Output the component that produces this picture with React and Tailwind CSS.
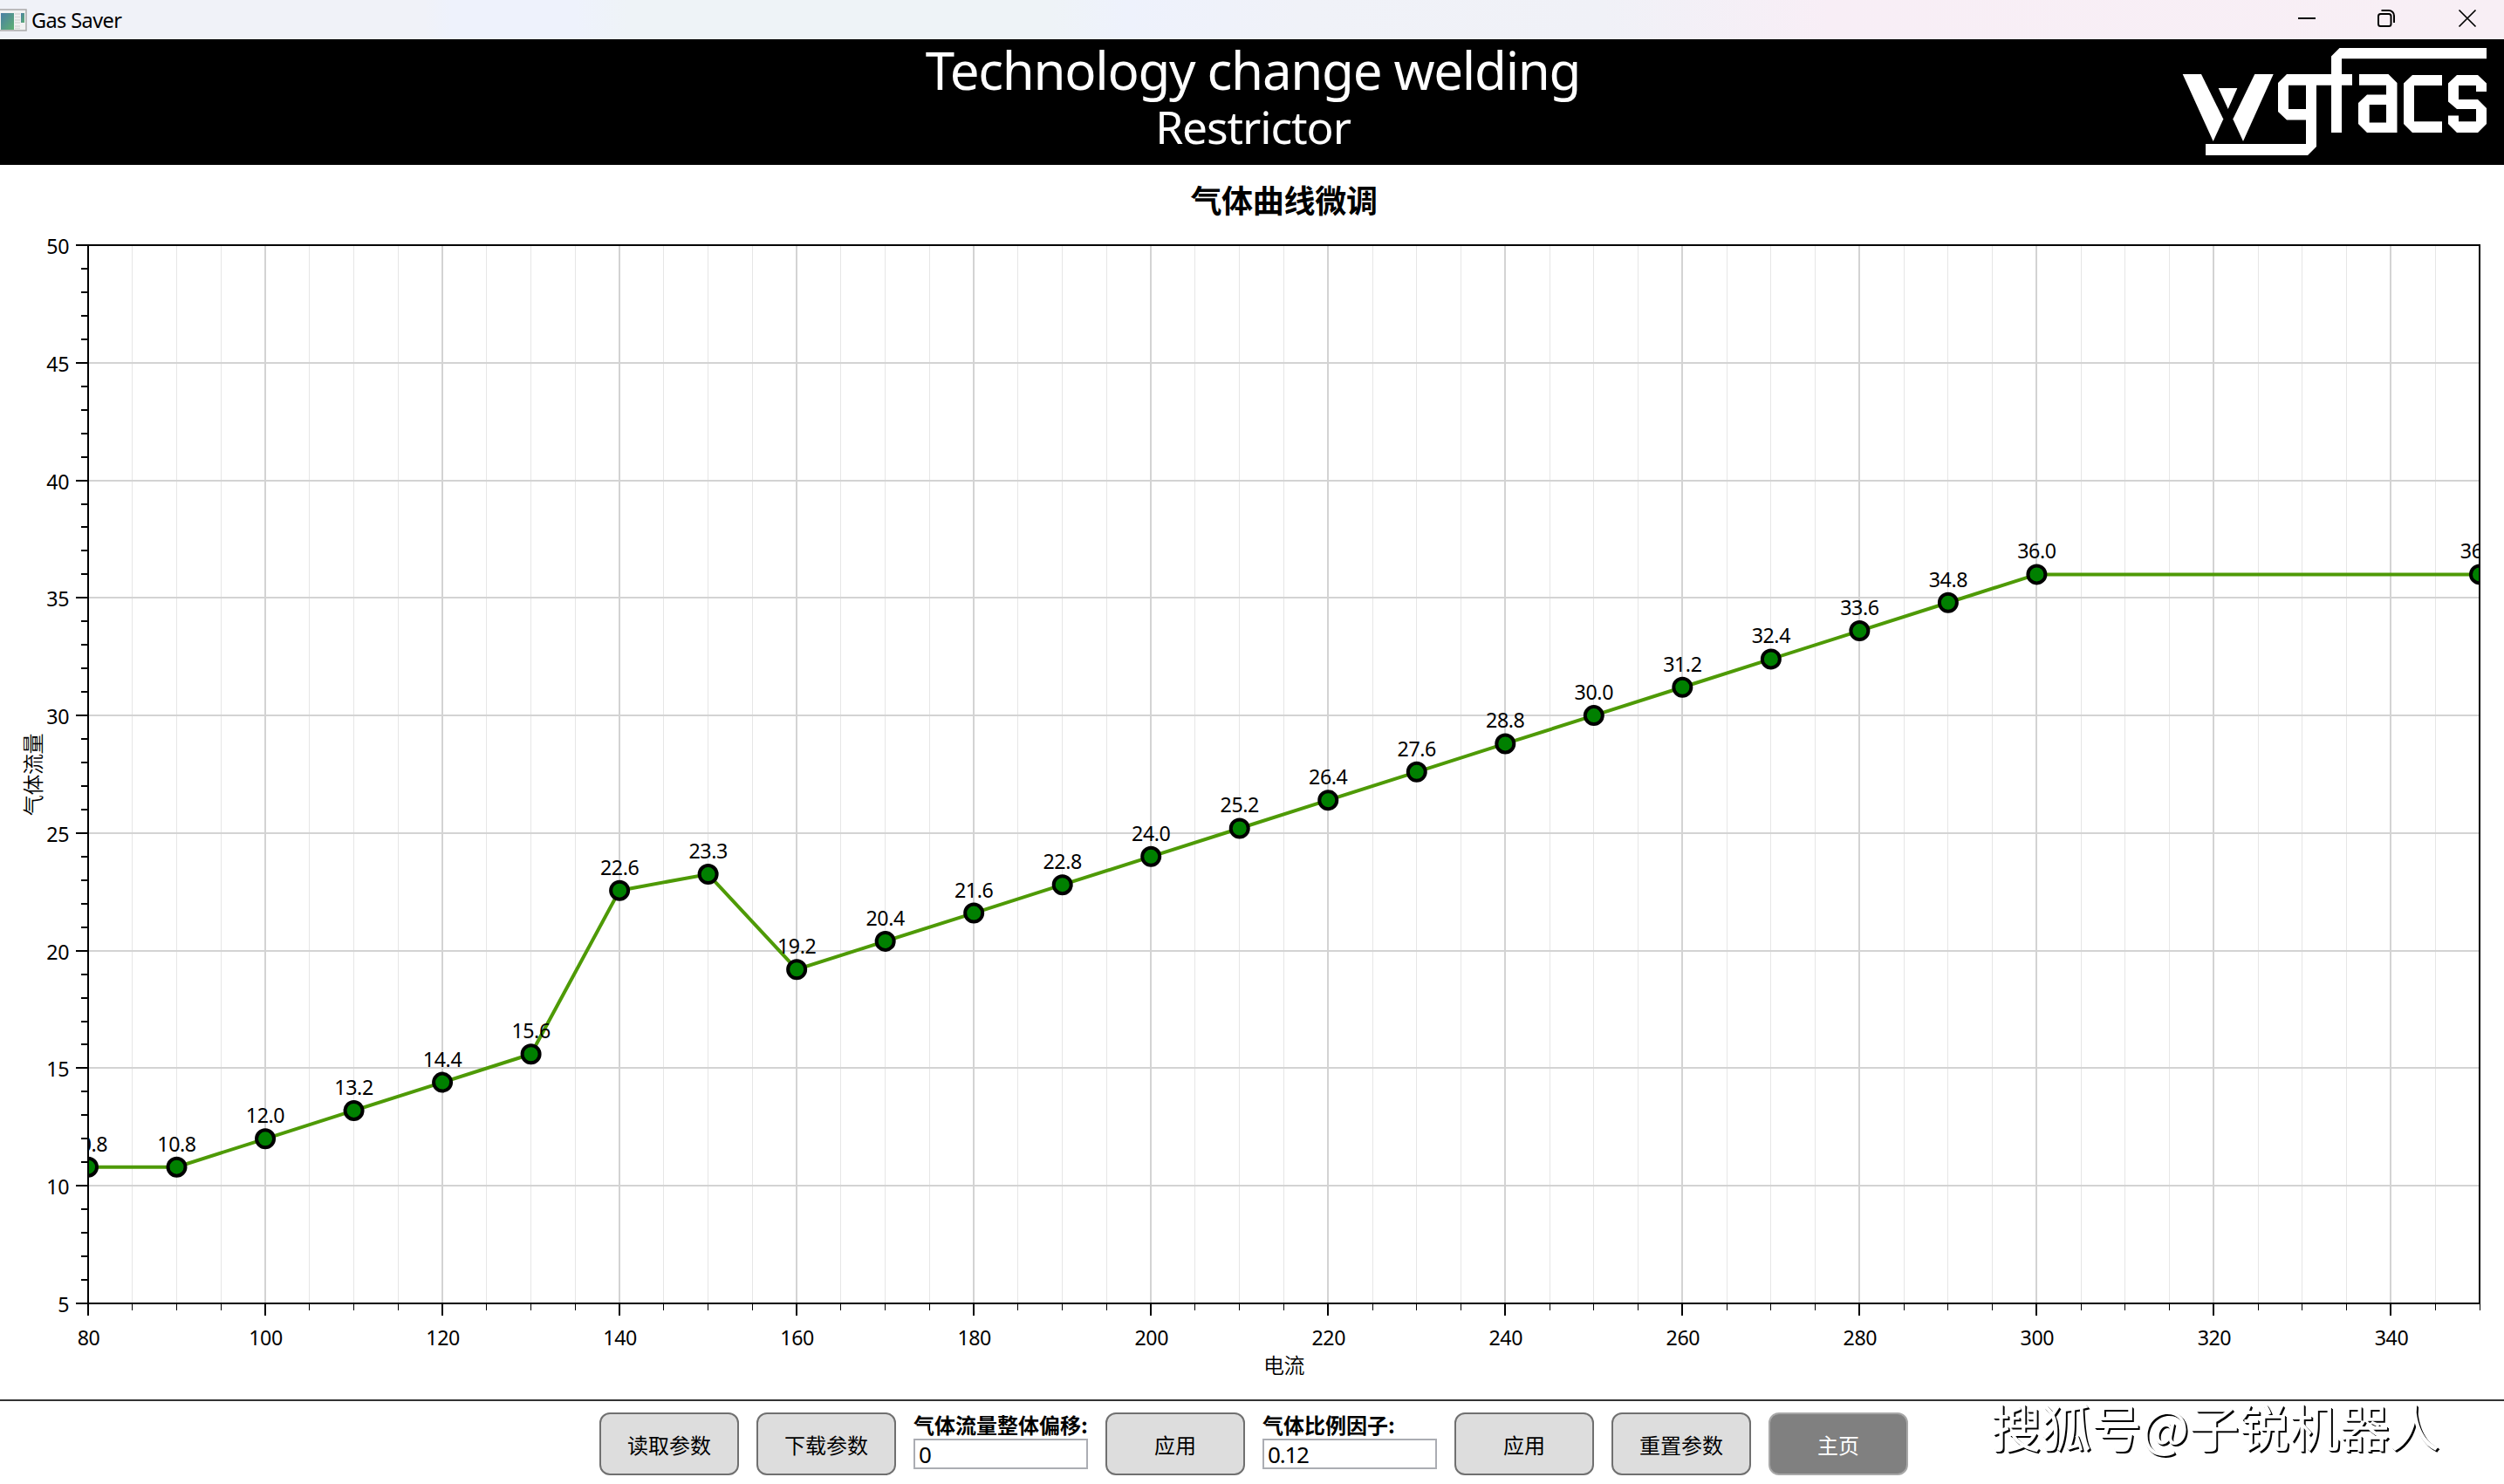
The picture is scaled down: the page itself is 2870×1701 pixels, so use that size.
const POINTS = [
	[80, 10.8], [90, 10.8], [100, 12.0], [110, 13.2], [120, 14.4], [130, 15.6],
	[140, 22.56], [150, 23.25], [160, 19.2], [170, 20.4], [180, 21.6], [190, 22.8],
	[200, 24.0], [210, 25.2], [220, 26.4], [230, 27.6], [240, 28.8], [250, 30.0],
	[260, 31.2], [270, 32.4], [280, 33.6], [290, 34.8], [300, 36.0], [350, 36.0],
];

// plot area inside the chart svg
const LEFT = 101;
const RIGHT = 2842;
const TOP = 92;
const BOTTOM = 1305;

const xPos = (v) => LEFT + ((v - 80) / 270) * (RIGHT - LEFT);
const yPos = (v) => BOTTOM - ((v - 5) / 45) * (BOTTOM - TOP);

const range = (from, to, step) => {
	const out = [];
	for (let v = from; v <= to; v += step) out.push(v);
	return out;
};

const LATIN = "font-['Noto_Sans','Noto_Sans_CJK_SC',sans-serif]";
const CJK = "font-['Noto_Sans_CJK_SC',sans-serif]";

function TitleBar() {
	return (
		<div className="h-[45px] flex items-center justify-between bg-[linear-gradient(to_right,#f0f2f8_0%,#f0f2f8_17%,#eef2fc_18%,#eef2fc_23%,#eef3f7_25%,#eef3f7_42%,#eef2fc_45%,#eff2fa_49%,#f0f2f8_52%,#f0f1f7_64%,#f8eef6_73%,#f8eff5_100%)]">
			<div className="flex items-center">
				<svg className="w-[31px] h-[26px]" viewBox="0 0 31 26">
					<defs>
						<linearGradient id="appIcon" x1="0" y1="0" x2="1" y2="1">
							<stop offset="0" stopColor="#4a7fa5" />
							<stop offset="1" stopColor="#5fb071" />
						</linearGradient>
					</defs>
					<rect x="-1" y="1" width="31" height="24" fill="#f2f2f2" stroke="#a9a9a9" strokeWidth="1.5" />
					<rect x="1" y="5" width="15" height="19" fill="url(#appIcon)" />
					<path d="M17 6h6M17 9.500h6M17 13h6M17 16h6M17 20h6M17 22.500h6" stroke="#d8d8d8" strokeWidth="1.500" />
					<rect x="24" y="5" width="4" height="11" fill="url(#appIcon)" />
				</svg>
				<span className="ml-[5px] mt-[3px] text-[23.5px] leading-none tracking-[-0.6px] text-black">Gas Saver</span>
			</div>
			<svg className="w-[240px] h-[45px]" viewBox="0 0 240 45" fill="none" stroke="#000" strokeWidth="2">
				<path d="M4 21H24" />
				<rect x="96" y="16" width="14.500" height="14" rx="2.500" />
				<path d="M99.500 12H108a6 6 0 0 1 6 6V26" />
				<path d="M188.500 11.500L207.500 30.500M207.500 11.500L188.500 30.500" strokeWidth="1.700" />
			</svg>
		</div>
	);
}

function Logo() {
	return (
		<svg className="w-[350px] h-[125px]" viewBox="30 54 350 125" fill="#fff" fillRule="evenodd">
			{/* w */}
			<path d="M31.700 85H53L78.300 136.500L66.700 162Z" />
			<path d="M114.300 85H135.700L101 162L89.300 136.500Z" />
			<path d="M72.700 101H94.300L83.700 125Z" />
			{/* g, joined to the crossbar of the f */}
			<path d="M151 85H202V64.500L211.500 55H380V67.300H214V85H226V97.700H214V152H202V97.700H185V168L175 178H58V165H173V137.500H151L141 128V95ZM153 97.700V125H173V97.700Z" />
			{/* a, c, s */}
			<path d="M234 85H267.500L277.500 95V152H243L233 142V118L243 108.500H265V97.700H234ZM245.700 120V140.500H265V120Z" />
			<path d="M295 86H329V98H297V139.300H329V152H295L285 142V95.500Z" />
			<path d="M346 86H370L380 95.500V105H368V98H348V114H370L380 124V142L370 152H346L336 142V132.500H348V139.300H368V125H346L336 116.500V95.500Z" />
		</svg>
	);
}

function Header() {
	return (
		<div className="h-[144px] bg-black text-white grid grid-cols-[1fr_auto_1fr]">
			<div />
			<div className="flex flex-col items-center pl-[2px]">
				<div className="h-[74px] text-[60px] leading-[70px] tracking-[-1.3px] whitespace-nowrap">Technology change welding</div>
				<div className="h-[54px] text-[51.5px] leading-[53px] tracking-[-1.1px]">Restrictor</div>
			</div>
			<div className="flex justify-end pt-[9px] pr-5">
				<Logo />
			</div>
		</div>
	);
}

function Chart() {
	return (
		<svg className="block w-[2870px] h-[1415px]" viewBox="0 0 2870 1415" fontSize="23.2" letterSpacing="-0.4">
			<defs>
				<clipPath id="plot">
					<rect x={LEFT} y={TOP} width={RIGHT - LEFT} height={BOTTOM - TOP} />
				</clipPath>
			</defs>

			<text x="1471.5" y="54.5" textAnchor="middle" fontSize="36" letterSpacing="-0.3" fontWeight="bold" className={CJK}>气体曲线微调</text>

			{/* grid */}
			{range(85, 345, 5).map((v) => (
				<line
					key={v}
					x1={v % 20 ? Math.floor(xPos(v)) + 0.5 : Math.round(xPos(v))}
					x2={v % 20 ? Math.floor(xPos(v)) + 0.5 : Math.round(xPos(v))}
					y1={TOP}
					y2={BOTTOM}
					stroke={v % 20 ? "#e6e6e6" : "#d3d3d3"}
					strokeWidth={v % 20 ? 1 : 2}
				/>
			))}
			{range(10, 45, 5).map((v) => (
				<line key={v} x1={LEFT} x2={RIGHT} y1={Math.round(yPos(v))} y2={Math.round(yPos(v))} stroke="#d3d3d3" strokeWidth="2" />
			))}

			{/* series */}
			<g clipPath="url(#plot)">
				<polyline points={POINTS.map(([x, y]) => `${xPos(x)},${yPos(y)}`).join(" ")} fill="none" stroke="#4e9a06" strokeWidth="4" />
				{POINTS.map(([x, y]) => (
					<circle key={x} cx={xPos(x)} cy={yPos(y)} r="10" fill="#008000" stroke="#000" strokeWidth="4" />
				))}
				{POINTS.map(([x, y]) => (
					<text key={x} x={xPos(x)} y={yPos(y) - 18} textAnchor="middle">
						{(Math.round(y * 10 + 0.001) / 10).toFixed(1)}
					</text>
				))}
			</g>

			{/* axes */}
			<rect x={LEFT} y={TOP} width={RIGHT - LEFT} height={BOTTOM - TOP} fill="none" stroke="#000" strokeWidth="2" />
			{range(80, 350, 5).map((v) => {
				const major = v % 20 === 0;
				const x = major ? Math.round(xPos(v)) : Math.floor(xPos(v)) + 0.5;
				return <line key={v} x1={x} x2={x} y1={BOTTOM} y2={BOTTOM + (major ? 14 : 8)} stroke="#000" strokeWidth={major ? 2 : 1} />;
			})}
			{range(5, 50, 1).map((v) => {
				const y = Math.round(yPos(v));
				return <line key={v} x1={LEFT - (v % 5 ? 8 : 14)} x2={LEFT} y1={y} y2={y} stroke="#000" strokeWidth="2" />;
			})}
			{range(80, 340, 20).map((v) => (
				<text key={v} x={xPos(v) + 0.5} y="1353" textAnchor="middle">{v}</text>
			))}
			{range(5, 50, 5).map((v) => (
				<text key={v} x="79" y={yPos(v) + 10} textAnchor="end">{v}</text>
			))}
			<text x="1471.5" y="1385" textAnchor="middle" fontSize="24" className={`font-[350] ${CJK}`}>电流</text>
			<text transform="translate(47 699) rotate(-90)" textAnchor="middle" fontSize="24" className={`font-[350] ${CJK}`}>气体流量</text>
		</svg>
	);
}

function Button({ children, dark }) {
	return (
		<button
			className={`w-40 h-[72px] pt-0.5 rounded-xl border-2 text-2xl ${CJK} ${
				dark ? "bg-[#808080] border-[#a8a8a8] text-white" : "bg-[#dddddd] border-[#707070] text-black"
			}`}
		>
			{children}
		</button>
	);
}

function Field({ label, value }) {
	return (
		<label className="w-[200px] h-[72px] flex flex-col">
			<span className={`h-[30px] text-2xl leading-[28px] font-bold whitespace-nowrap ${CJK}`}>{label}</span>
			<input
				className="w-[200px] h-[35px] border-2 border-[#abadb3] bg-white px-1 text-[26px] leading-none tracking-[-1.2px] outline-none"
				defaultValue={value}
			/>
		</label>
	);
}

function Toolbar() {
	return (
		<div className="h-[97px] border-t-2 border-[#333333] pt-[13px] pl-1 flex justify-center gap-5">
			<Button>读取参数</Button>
			<Button>下载参数</Button>
			<Field label="气体流量整体偏移:" value="0" />
			<Button>应用</Button>
			<Field label="气体比例因子:" value="0.12" />
			<Button>应用</Button>
			<Button>重置参数</Button>
			<Button dark>主页</Button>
		</div>
	);
}

export default function App() {
	return (
		<div className={`relative w-[2870px] h-[1701px] overflow-hidden bg-white text-black ${LATIN}`}>
			<TitleBar />
			<Header />
			<Chart />
			<Toolbar />
			{/* watermark */}
			<div className={`absolute left-[2282px] top-[1596px] text-[57.5px] leading-[76px] whitespace-nowrap text-white [text-shadow:1px_1px_0_#000,2px_2px_0_#000] ${CJK}`}>
				搜狐号@子锐机器人
			</div>
		</div>
	);
}
